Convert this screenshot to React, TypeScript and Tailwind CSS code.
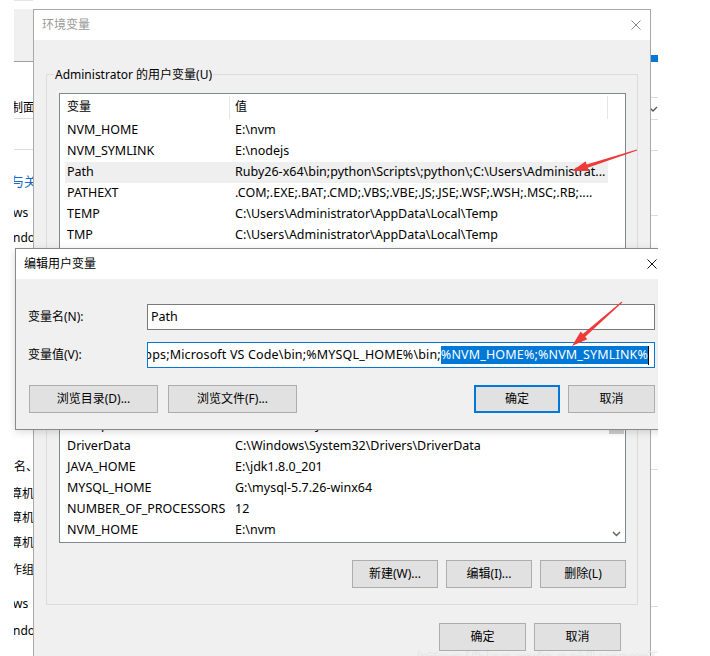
import React from 'react';

const font = "font-['Noto_Sans','Noto_Sans_CJK_SC',sans-serif]";

type Row = { name: string; value: string; active?: boolean };

const topRows: Row[] = [
  { name: 'NVM_HOME', value: 'E:\\nvm' },
  { name: 'NVM_SYMLINK', value: 'E:\\nodejs' },
  { name: 'Path', value: 'Ruby26-x64\\bin;python\\Scripts\\;python\\;C:\\Users\\Administrat...', active: true },
  { name: 'PATHEXT', value: '.COM;.EXE;.BAT;.CMD;.VBS;.VBE;.JS;.JSE;.WSF;.WSH;.MSC;.RB;....' },
  { name: 'TEMP', value: 'C:\\Users\\Administrator\\AppData\\Local\\Temp' },
  { name: 'TMP', value: 'C:\\Users\\Administrator\\AppData\\Local\\Temp' },
];

// sits mostly behind the edit dialog, only its descenders peek out
const hiddenRow: Row = { name: 'ComSpec', value: 'C:\\Windows\\system32\\cmd.exe' };

const bottomRows: Row[] = [
  { name: 'DriverData', value: 'C:\\Windows\\System32\\Drivers\\DriverData' },
  { name: 'JAVA_HOME', value: 'E:\\jdk1.8.0_201' },
  { name: 'MYSQL_HOME', value: 'G:\\mysql-5.7.26-winx64' },
  { name: 'NUMBER_OF_PROCESSORS', value: '12' },
  { name: 'NVM_HOME', value: 'E:\\nvm' },
];

function CloseIcon({ color }: { color: string }) {
  return (
    <svg width="10" height="10" viewBox="0 0 10 10" className="shrink-0">
      <path d="M0.5 0.5L9.5 9.5M9.5 0.5L0.5 9.5" stroke={color} strokeWidth="1" fill="none" />
    </svg>
  );
}

function WinButton({ label, className = '', primary = false }: { label: string; className?: string; primary?: boolean }) {
  return (
    <div
      className={`flex h-[28px] shrink-0 items-center justify-center bg-[#e1e1e1] ${
        primary ? 'border-2 border-[#0078d7]' : 'border border-[#adadad]'
      } ${className}`}
    >
      {label}
    </div>
  );
}

function ListRow({ row }: { row: Row }) {
  return (
    <div className={`flex h-[21px] items-center whitespace-nowrap text-[12.5px] ${row.active ? 'bg-[#efefef]' : ''}`}>
      <div className="w-[168px] shrink-0 overflow-hidden pl-[2px]">{row.name}</div>
      <div className="flex-1 overflow-hidden pl-[2px]">{row.value}</div>
    </div>
  );
}

function BackgroundWindow() {
  return (
    <div className="absolute left-[14px] top-0 flex h-[656px] w-[644px] justify-between overflow-hidden bg-white text-[12px] text-black">
      <div className="flex w-[19px] flex-col overflow-hidden">
        <div className="h-px w-[166px] shrink-0 bg-[#e6e6e6]" />
        <div className="mt-[8px] h-[53px] shrink-0 border-b border-[#a0a0a0] bg-[#f0f0f0]" />
        <div className="-ml-[3px] mt-[36px] h-[20px] whitespace-nowrap leading-[20px]">制面板</div>
        <div className="h-px shrink-0 bg-[#dcdcdc]" />
        <div className="mt-[30px] h-px shrink-0 bg-[#dcdcdc]" />
        <div className="-ml-[3px] mt-[21px] h-[20px] whitespace-nowrap text-[13px] leading-[20px] text-[#1a67c4]">与关</div>
        <div className="-ml-[1px] mt-[12px] h-[20px] leading-[20px]">ws</div>
        <div className="-ml-[1px] mt-[5px] h-[20px] leading-[20px]">ndo</div>
        <div className="mt-[209px] h-[20px] leading-[20px]">名、</div>
        <div className="-ml-[4px] mt-[7px] h-[20px] whitespace-nowrap leading-[20px]">算机</div>
        <div className="-ml-[4px] mt-[4px] h-[20px] whitespace-nowrap leading-[20px]">算机</div>
        <div className="-ml-[4px] mt-[5px] h-[20px] whitespace-nowrap leading-[20px]">算机</div>
        <div className="-ml-[4px] mt-[7px] h-[20px] whitespace-nowrap leading-[20px]">作组</div>
        <div className="-ml-[1px] mt-[14px] h-[20px] leading-[20px]">ws</div>
        <div className="-ml-[1px] mt-[7px] h-[20px] leading-[20px]">ndo</div>
      </div>
      <div className="flex w-[8px] flex-col">
        <div className="mt-[55px] h-[7px] shrink-0 bg-[#0078d7]" />
        <div className="mt-[35px] h-px shrink-0 bg-[#dcdcdc]" />
        <div className="flex h-[21px] shrink-0 items-center">
          <svg width="10" height="6" viewBox="0 0 10 6" className="-ml-[2px]">
            <path d="M1 1L5 5L9 1" stroke="#555" strokeWidth="1.3" fill="none" />
          </svg>
        </div>
        <div className="h-px shrink-0 bg-[#dcdcdc]" />
        <div className="mt-[30px] h-px shrink-0 bg-[#dcdcdc]" />
        <div className="mt-[64px] h-px shrink-0 bg-[#dcdcdc]" />
        <div className="mt-[253px] h-px shrink-0 bg-[#dcdcdc]" />
        <div className="mt-[136px] h-px shrink-0 bg-[#dcdcdc]" />
      </div>
    </div>
  );
}

function EnvWindow() {
  return (
    <div className="absolute left-[33px] top-[9px] h-[660px] w-[618px] border border-[#a8a8a8] bg-[#f0f0f0] text-[12px] text-black">
      <div className="flex h-[30px] items-center justify-between bg-white pl-[8px] pr-[9px]">
        <span className="text-[#9a9a9a]">环境变量</span>
        <CloseIcon color="#8a8a8a" />
      </div>
      <div className="pl-[12px] pt-[34px]">
        <div className="relative w-[592px] border border-[#dcdcdc] pb-[16px] pl-[12px] pr-[11px] pt-[18px]">
          <span className="absolute -top-[9px] left-[7px] bg-[#f0f0f0] px-[1px] leading-[17px]">
            Administrator 的用户变量(U)
          </span>
          <div className="flex h-[450px] w-[567px] flex-col border border-[#828790] bg-white">
            <div className="flex h-[26px] shrink-0 items-center">
              <div className="w-[169px] shrink-0 pl-[7px]">变量</div>
              <div className="h-[23px] w-px shrink-0 bg-[#e5e5e5]" />
              <div className="w-[377px] shrink-0 pl-[5px]">值</div>
              <div className="h-[23px] w-px shrink-0 bg-[#e5e5e5]" />
            </div>
            <div className="flex flex-1">
              <div className="ml-[5px] flex w-[543px] flex-col">
                {topRows.map((r) => (
                  <ListRow key={r.name} row={r} />
                ))}
                <div className="flex h-[190px] flex-col justify-end">
                  <ListRow row={hiddenRow} />
                </div>
                {bottomRows.map((r) => (
                  <ListRow key={r.name + '2'} row={r} />
                ))}
              </div>
              <div className="flex w-[17px] flex-col">
                <div className="h-[160px] shrink-0" />
                <div className="mx-[1px] h-[154px] shrink-0 bg-[#cdcdcd]" />
                <div className="flex-1" />
                <div className="flex h-[17px] shrink-0 items-center justify-center">
                  <svg width="9" height="6" viewBox="0 0 9 6">
                    <path d="M1 1L4.5 4.5L8 1" stroke="#606060" strokeWidth="1.4" fill="none" />
                  </svg>
                </div>
              </div>
            </div>
          </div>
          <div className="mt-[17px] flex justify-end gap-[8px]">
            <WinButton label="新建(W)..." className="w-[86px]" />
            <WinButton label="编辑(I)..." className="w-[86px]" />
            <WinButton label="删除(L)" className="w-[86px]" />
          </div>
        </div>
      </div>
      <div className="mt-[18px] flex justify-end gap-[8px] pr-[29px]">
        <WinButton label="确定" className="w-[87px]" />
        <WinButton label="取消" className="w-[87px]" />
      </div>
    </div>
  );
}

function EditWindow() {
  return (
    <div className="absolute left-[15px] top-[248px] h-[182px] w-[660px] border border-[#8a8a8a] bg-[#f0f0f0] text-[12px] text-black shadow-[0_2px_8px_rgba(0,0,0,0.15)]">
      <div className="flex h-[30px] items-center justify-between bg-white pl-[8px] pr-[17px]">
        <span>编辑用户变量</span>
        <CloseIcon color="#111" />
      </div>
      <div className="pl-[12px] pt-[25px]">
        <div className="flex items-center">
          <div className="w-[119px] shrink-0">变量名(N):</div>
          <div className="flex h-[26px] w-[508px] items-center border border-[#7a7a7a] bg-white pl-[3px] text-[12.5px]">
            Path
          </div>
        </div>
        <div className="mt-[12px] flex items-center">
          <div className="w-[119px] shrink-0">变量值(V):</div>
          <div className="flex h-[26px] w-[508px] items-center justify-end overflow-hidden whitespace-nowrap border border-[#0078d7] bg-white pr-[5px] text-[12.5px] tracking-[0.16px]">
            <span className="shrink-0">WindowsApps;Microsoft VS Code\bin;%MYSQL_HOME%\bin;</span>
            <span className="shrink-0 bg-[#0078d7] leading-[18px] text-white">%NVM_HOME%;%NVM_SYMLINK%</span>
            <span className="h-[19px] w-px shrink-0 bg-black" />
          </div>
        </div>
        <div className="mt-[17px] flex w-[627px] justify-between pl-[1px]">
          <div className="flex gap-[10px]">
            <WinButton label="浏览目录(D)..." className="w-[129px]" />
            <WinButton label="浏览文件(F)..." className="w-[129px]" />
          </div>
          <div className="flex gap-[8px]">
            <WinButton label="确定" className="w-[86px]" primary />
            <WinButton label="取消" className="w-[87px]" />
          </div>
        </div>
      </div>
    </div>
  );
}

function Arrows() {
  return (
    <svg className="pointer-events-none absolute left-0 top-0" width="710" height="656" viewBox="0 0 710 656">
      <polygon
        fill="#ef3a3a"
        points="637.15,150.5 587.75,167.8 588.7,170.9 572,171 585.7,161.3 586.65,164.4 636.85,149.5"
      />
      <polygon
        fill="#ef3a3a"
        points="622.3,302.4 585.2,336.8 587.3,339.2 572,346 580.7,331.6 582.8,334.0 621.7,301.6"
      />
    </svg>
  );
}

export default function App() {
  return (
    <div className={`relative h-[656px] w-[710px] overflow-hidden bg-white ${font}`}>
      <div className="relative h-[656px] w-[658px] overflow-hidden">
        <BackgroundWindow />
        <EnvWindow />
        <EditWindow />
        <div className="absolute left-[417px] top-[644px] whitespace-nowrap text-[17px] text-white/80 [text-shadow:0_0_1px_rgba(0,0,0,0.25)]">
          https://blog.csdn.net/LuangsTing
        </div>
      </div>
      <Arrows />
    </div>
  );
}
